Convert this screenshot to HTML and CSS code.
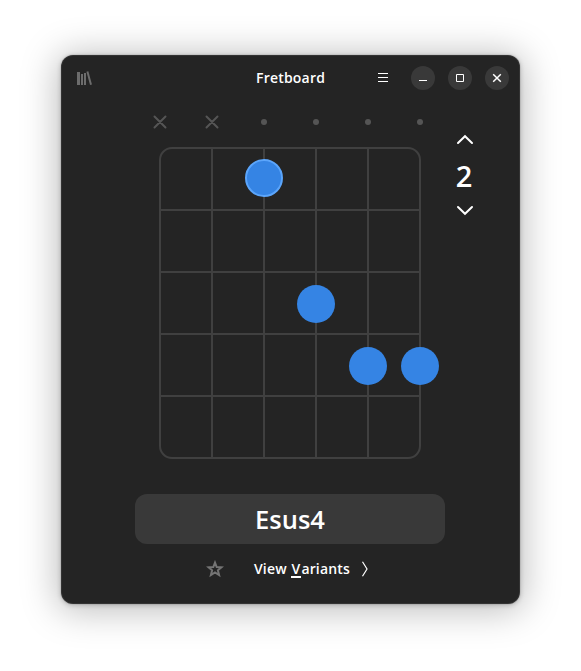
FILE: index.html
```html
<!DOCTYPE html>
<html lang="en">
<head>
<meta charset="utf-8">
<title>Fretboard</title>
<link rel="stylesheet" href="styles.css">
</head>
<body>
<main class="window">
  <header class="headerbar">
    <svg class="library" width="16" height="16" viewBox="0 0 16 16">
      <path d="M0 2h3v13H0zM4 4h2v11H4zM7 3h2v12H7z" fill="currentColor"/>
      <path d="M10.4 1.4 14 14.8" stroke="currentColor" stroke-width="2" fill="none"/>
    </svg>
    <h1 class="title">Fretboard</h1>
    <div class="controls">
      <svg class="menu" width="16" height="16" viewBox="0 0 16 16"><path d="M3 3.5h10M3 7.5h10M3 11.5h10"/></svg>
      <span class="control"><svg width="24" height="24" viewBox="0 0 24 24"><path d="M8 14.5h8"/></svg></span>
      <span class="control"><svg width="24" height="24" viewBox="0 0 24 24"><path d="M8.5 8.5h7v7h-7z"/></svg></span>
      <span class="control"><svg width="24" height="24" viewBox="0 0 24 24"><path class="close" d="M8.2 8.2l7.6 7.6M15.8 8.2l-7.6 7.6"/></svg></span>
    </div>
  </header>
  <section class="chord">
    <svg class="board" width="298" height="368" viewBox="141 101 298 368">
      <g class="mute">
        <path d="M154.5 116.5l11 11M165.5 116.5l-11 11M206.5 116.5l11 11M217.5 116.5l-11 11"/>
      </g>
      <g class="open">
        <circle cx="264" cy="122" r="3"/><circle cx="316" cy="122" r="3"/><circle cx="368" cy="122" r="3"/><circle cx="420" cy="122" r="3"/>
      </g>
      <g class="grid">
        <rect x="160" y="148" width="260" height="310" rx="12"/>
        <path d="M212 148v310M264 148v310M316 148v310M368 148v310M160 210h260M160 272h260M160 334h260M160 396h260"/>
      </g>
      <g class="fingers">
        <circle class="focused" cx="264" cy="178" r="18"/>
        <circle cx="316" cy="304" r="19"/><circle cx="368" cy="366" r="19"/><circle cx="420" cy="366" r="19"/>
      </g>
    </svg>
    <div class="position">
      <svg width="18" height="12" viewBox="0 0 18 12"><path d="M2 9 9 2.2 16 9"/></svg>
      <span class="number">2</span>
      <svg width="18" height="12" viewBox="0 0 18 12"><path d="M2 2 9 8.8 16 2"/></svg>
    </div>
  </section>
  <div class="name">Esus4</div>
  <footer class="actions">
    <svg class="star" width="18" height="18" viewBox="0 0 18 18"><path d="M9 2.6l1.7 4.4 4.8.3-3.6 3 1.2 4.7L9 12.5 4.9 15l1.2-4.7-3.6-3 4.8-.3z"/></svg>
    <span class="variants">View <span class="mnemonic">V</span>ariants</span>
    <svg class="next" width="8" height="16" viewBox="0 0 8 16"><path d="M1.5.8 6 8l-4.5 7.2"/></svg>
  </footer>
</main>
</body>
</html>
```
FILE: styles.css
```css
body {
  margin: 0;
  padding: 55px 61px 67px;
  background: #fff;
  font-family: "Open Sans", "Noto Sans", sans-serif;
  font-weight: 600;
  color: #fff;
}
svg { display: block; fill: none; }
.window {
  width: 459px;
  height: 549px;
  border-radius: 12px;
  background: #242424;
  box-shadow: inset 0 0 0 1px rgba(255, 255, 255, .07), 0 0 0 1px rgba(0, 0, 0, .05),
    0 1px 5px rgba(0, 0, 0, .22), 0 3px 36px 4px rgba(0, 0, 0, .26);
}
.headerbar {
  display: grid;
  grid-template-columns: 1fr auto 1fr;
  align-items: center;
  height: 46px;
  padding: 0 11px 0 16px;
  box-sizing: border-box;
}
.library { color: #6c6c6c; }
.title {
  margin: 0;
  width: 74px;
  font-size: 14px;
  line-height: 20px;
  font-weight: 650;
  letter-spacing: .2px;
  white-space: nowrap;
}
.controls { display: flex; justify-content: flex-end; align-items: center; gap: 13px; }
.controls svg { stroke: #fff; stroke-width: 1; }
.menu { margin-right: 7px; }
.control { width: 24px; height: 24px; border-radius: 50%; background: #393939; }
.controls .close { stroke-width: 1.5; }
.chord { display: flex; padding-left: 80px; height: 368px; }
.board { overflow: visible; }
.mute { stroke: #555; stroke-width: 2; stroke-linecap: round; }
.open { fill: #555; }
.grid { stroke: #404040; stroke-width: 2; }
.fingers { fill: #3584e4; }
.focused { stroke: #5ba5fb; stroke-width: 2; }
.position {
  display: flex;
  flex-direction: column;
  align-items: center;
  width: 52px;
  padding-top: 33px;
}
.position svg { stroke: #fff; stroke-width: 2; stroke-linecap: round; }
.number { height: 59px; margin-left: -2px; line-height: 59px; font-size: 29px; font-weight: 650; }
.name {
  width: 310px;
  height: 50px;
  margin: 25px 0 0 74px;
  border-radius: 12px;
  background: #393939;
  font-size: 25.5px;
  font-weight: 650;
  line-height: 50px;
  text-align: center;
}
.actions { display: flex; align-items: center; height: 50px; padding-left: 145px; }
.star { stroke: #747474; stroke-width: 2; }
.variants { width: 97px; margin-left: 30px; font-size: 14px; font-weight: 650; letter-spacing: .15px; line-height: 20px; white-space: nowrap; }
.mnemonic { display: inline-block; height: 17px; padding: 0 1px; border-bottom: 2px solid #fff; line-height: 20px; }
.next { margin-left: 10px; stroke: #fff; stroke-width: 1.2; }
```
